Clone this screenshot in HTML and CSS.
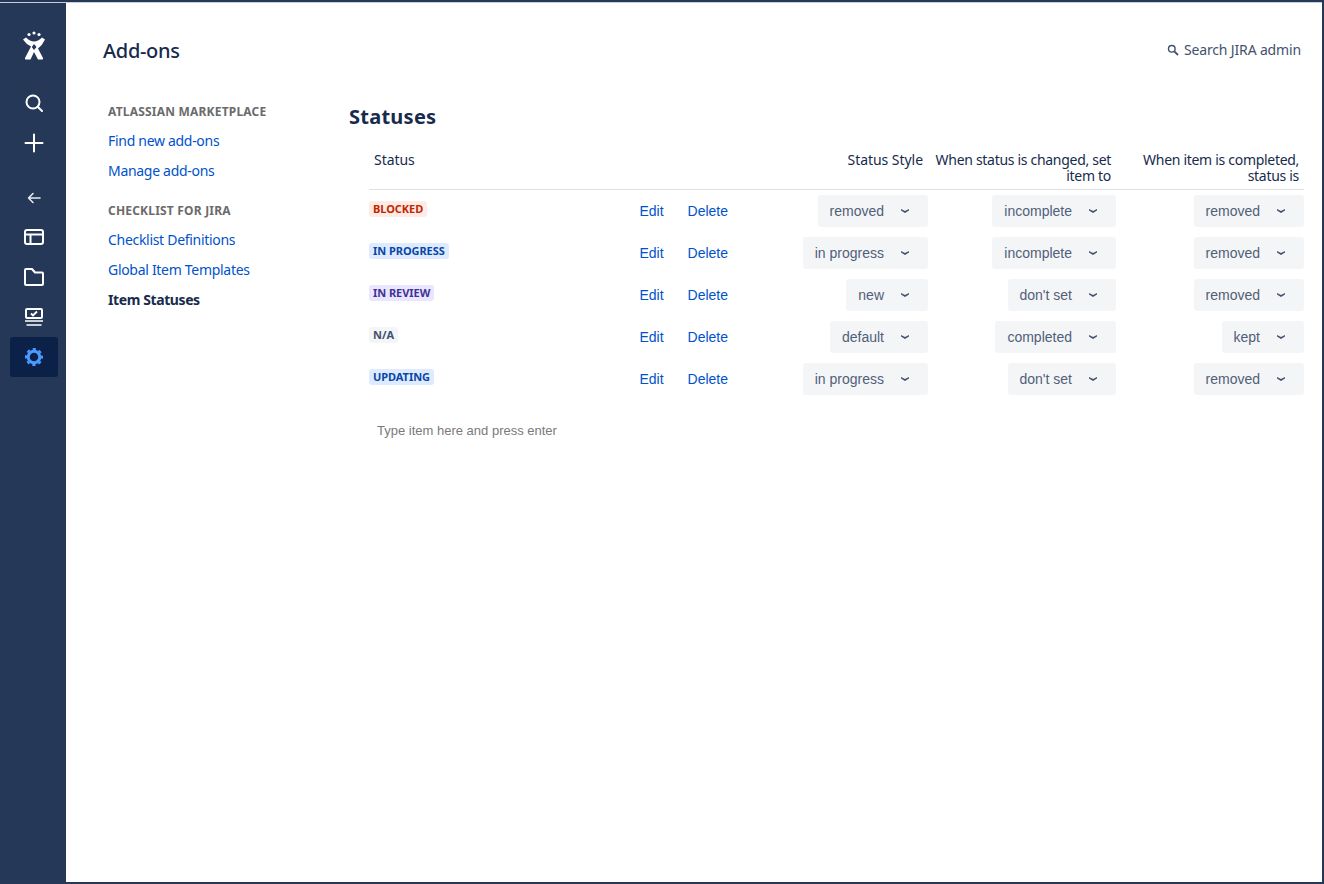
FILE: index.html
```html
<!DOCTYPE html>
<html lang="en">
<head>
<meta charset="utf-8">
<title>Item Statuses</title>
<link rel="stylesheet" href="styles.css">
</head>
<body>
<div class="app">
  <nav class="rail">
    <a class="rail-btn logo"><svg width="24" height="30" viewBox="0 0 24 30"><g fill="#fff"><circle cx="7" cy="3.500" r="1.600"/><circle cx="12" cy="2" r="1.600"/><circle cx="17" cy="3.500" r="1.600"/><path d="M1 8.500 4 6.500Q8 10.500 12 10.500Q16 10.500 20 6.500L23 8.500Q20.500 14 16 17.500L21 27Q21.500 28.500 20 28.500L16 28.500 12 21 8.500 28.500 4 28.500Q2.500 28.500 3 27L9 15.500Q4 13 1 8.500Z"/><path d="M12 13 14.500 16 12 19 9.800 16Z" fill="#253858"/></g></svg></a>
    <a class="rail-btn search"><svg width="24" height="24" viewBox="0 0 24 24" fill="none" stroke="#fff" stroke-width="2" stroke-linecap="round"><circle cx="11" cy="11" r="6.500"/><path d="M16 16 20 20"/></svg></a>
    <a class="rail-btn plus"><svg width="24" height="24" viewBox="0 0 24 24" fill="none" stroke="#fff" stroke-width="2" stroke-linecap="round"><path d="M12 3.500V20.500M3.500 12H20.500"/></svg></a>
    <a class="rail-btn back"><svg width="24" height="24" viewBox="0 0 24 24" fill="none" stroke="#e6e9ef" stroke-width="1.600" stroke-linecap="round" stroke-linejoin="round"><path d="M6.500 12H18M11 7.500 6.500 12 11 16.500"/></svg></a>
    <a class="rail-btn board"><svg width="24" height="24" viewBox="0 0 24 24" fill="none" stroke="#fff" stroke-width="2"><rect x="3" y="5" width="18" height="14" rx="2"/><path d="M3 9.500H21M8.500 9.500V19"/></svg></a>
    <a class="rail-btn folder"><svg width="24" height="24" viewBox="0 0 24 24" fill="none" stroke="#fff" stroke-width="2" stroke-linejoin="round"><path d="M3 5Q3 4 4 4H10L13 7.500H20Q21 7.500 21 8.500V19Q21 20 20 20H4Q3 20 3 19Z"/></svg></a>
    <a class="rail-btn check"><svg width="24" height="24" viewBox="0 0 24 24" fill="none" stroke="#fff"><rect x="4" y="4" width="16" height="9" rx="1" stroke-width="2"/><path d="M9 8.500 11 10.500 15 6.500" stroke-width="1.800"/><path d="M3 16H21M4.500 20H19.500" stroke-width="1.600"/></svg></a>
    <a class="rail-btn active"><svg width="24" height="24" viewBox="0 0 24 24" fill="none" stroke="#4c9aff"><circle cx="12" cy="12" r="5.750" stroke-width="3"/><circle cx="12" cy="12" r="8" stroke-width="2" stroke-dasharray="3.300 2.983" stroke-dashoffset="1.650"/></svg></a>
  </nav>
  <main class="content">
    <header class="top">
      <h1>Add-ons</h1>
      <a class="admin-search"><svg width="12" height="12" viewBox="0 0 12 12" fill="none" stroke="#42526e" stroke-width="1.400"><circle cx="4.800" cy="4.800" r="3.300"/><path d="M7.300 7.300 11 11" stroke-width="1.800"/></svg>Search JIRA admin</a>
    </header>
    <div class="body">
      <aside class="side">
        <h4>ATLASSIAN MARKETPLACE</h4>
        <a>Find new add-ons</a>
        <a>Manage add-ons</a>
        <h4 class="second">CHECKLIST FOR JIRA</h4>
        <a>Checklist Definitions</a>
        <a>Global Item Templates</a>
        <a class="current">Item Statuses</a>
      </aside>
      <section class="panel">
        <h2>Statuses</h2>
        <div class="grid">
          <div class="head h-status">Status</div>
          <div class="head h-style">Status Style</div>
          <div class="head h-long">When status is changed, set item to</div>
          <div class="head h-long">When item is completed, status is</div>

          <div class="cell"><span class="tag red">BLOCKED</span></div>
          <div class="acts"><a>Edit</a><a>Delete</a></div>
          <div class="sel"><button>removed<i></i></button></div>
          <div class="sel"><button>incomplete<i></i></button></div>
          <div class="sel"><button>removed<i></i></button></div>

          <div class="cell"><span class="tag blue">IN PROGRESS</span></div>
          <div class="acts"><a>Edit</a><a>Delete</a></div>
          <div class="sel"><button>in progress<i></i></button></div>
          <div class="sel"><button>incomplete<i></i></button></div>
          <div class="sel"><button>removed<i></i></button></div>

          <div class="cell"><span class="tag purple">IN REVIEW</span></div>
          <div class="acts"><a>Edit</a><a>Delete</a></div>
          <div class="sel"><button>new<i></i></button></div>
          <div class="sel"><button>don't set<i></i></button></div>
          <div class="sel"><button>removed<i></i></button></div>

          <div class="cell"><span class="tag grey">N/A</span></div>
          <div class="acts"><a>Edit</a><a>Delete</a></div>
          <div class="sel"><button>default<i></i></button></div>
          <div class="sel"><button>completed<i></i></button></div>
          <div class="sel"><button>kept<i></i></button></div>

          <div class="cell"><span class="tag blue">UPDATING</span></div>
          <div class="acts"><a>Edit</a><a>Delete</a></div>
          <div class="sel"><button>in progress<i></i></button></div>
          <div class="sel"><button>don't set<i></i></button></div>
          <div class="sel"><button>removed<i></i></button></div>
        </div>
        <div class="new-item">Type item here and press enter</div>
      </section>
    </div>
  </main>
</div>
</body>
</html>
```

FILE: styles.css
```css
* { box-sizing: border-box; }
html, body { margin: 0; height: 100%; }
body { background: #253858; padding: 2px 2px 2px 0; font-family: "Noto Sans", sans-serif; color: #172b4d; overflow: hidden; }
.app { display: flex; height: 880px; background: #fff; border-top: 1px solid #c9ced6; }
.rail { width: 66px; flex: none; background: #253858; display: flex; flex-direction: column; align-items: center; padding: 26px 0 0 2px; }
.rail-btn { width: 48px; height: 40px; display: flex; align-items: center; justify-content: center; border-radius: 3px; }
.logo { height: 34px; margin-bottom: 20px; }
.plus { margin-bottom: 15px; }
.back { height: 39px; }
.active { background: #0b2147; }
.content { flex: 1; min-width: 0; padding: 0 20px 0 37px; }
.top { display: flex; justify-content: space-between; align-items: center; height: 95px; }
h1 { margin: 0; font-size: 20px; font-weight: 500; line-height: 24px; letter-spacing: -0.3px; }
.admin-search { display: flex; align-items: center; gap: 5px; margin: 0 1px 2px 0; font-size: 14px; letter-spacing: -0.15px; color: #42526e; }
.body { display: flex; }
.side { width: 246px; flex: none; padding-left: 5px; font-size: 14px; letter-spacing: -0.3px; }
.side h4 { margin: 4px 0 8px; font-size: 12px; font-weight: 700; letter-spacing: 0.2px; color: #6b6b6b; line-height: 20px; }
.side h4.second { margin-top: 11px; }
.side a { display: block; height: 30px; line-height: 22px; color: #0052cc; }
.side a.current { color: #172b4d; font-weight: 700; letter-spacing: -0.4px; }
.panel { flex: 1; min-width: 0; }
h2 { margin: 5px 0 11px; font-size: 20px; font-weight: 700; letter-spacing: 0.25px; line-height: 28px; color: #172b4d; }
.grid { margin-left: 20px; display: grid; grid-template-columns: 234px 125px 200px 188px 188px; font-family: "Liberation Sans", sans-serif; }
.head { font-family: "Noto Sans", sans-serif; font-size: 14px; letter-spacing: -0.05px; line-height: 16px; height: 48px; padding: 10px 5px 0; text-align: right; border-bottom: 1px solid #dfe1e6; }
.h-status { grid-column: 1 / 3; text-align: left; }
.h-long { letter-spacing: -0.3px; }
.cell { height: 42px; padding-top: 9px; }
.tag { display: inline-block; height: 16px; line-height: 16px; padding: 0 4px; border-radius: 3px; font-family: "Noto Sans", sans-serif; font-size: 11px; font-weight: 700; letter-spacing: -0.05px; }
.red { background: #ffebe6; color: #bf2600; }
.blue { background: #deebff; color: #0747a6; }
.purple { background: #eae6ff; color: #403294; }
.grey { background: #f4f5f7; color: #42526e; }
.acts { display: flex; gap: 24px; justify-content: flex-end; padding-top: 13px; font-size: 14px; line-height: 16px; color: #0052cc; }
.sel { display: flex; justify-content: flex-end; padding-top: 5px; }
.sel button { height: 32px; padding: 0 12px; border: 0; border-radius: 3px; background: #f4f5f7; color: #505f79; font: 14px "Liberation Sans", sans-serif; display: flex; align-items: center; }
.sel i { display: block; width: 8px; height: 4px; margin: 0 7px 0 17px; background: #42526e; clip-path: polygon(0 0, 50% 50%, 100% 0, 100% 40%, 50% 100%, 0 40%); }
.new-item { margin: 23px 0 0 28px; font: 13px/16px "Liberation Sans", sans-serif; color: #7a7a7a; }
```
